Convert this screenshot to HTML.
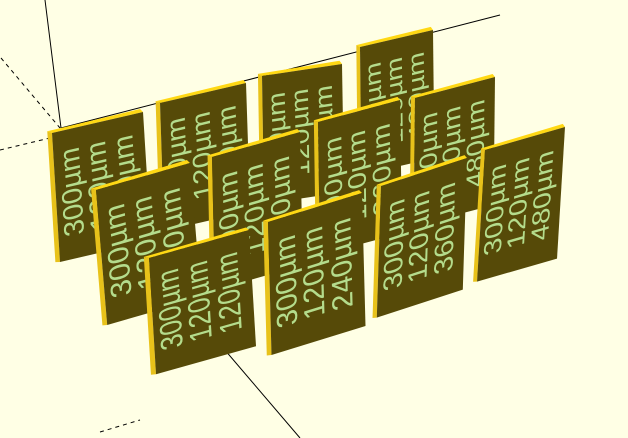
<!DOCTYPE html>
<html><head><meta charset="utf-8"><style>
html,body{margin:0;padding:0;background:#ffffe5;}
svg{display:block}
text{font-family:"Liberation Sans",sans-serif;font-size:31px;fill:#b4dc8c;}
</style></head><body>
<svg width="628" height="438" viewBox="0 0 628 438" xmlns="http://www.w3.org/2000/svg">
<rect width="628" height="438" fill="#ffffe5"/>
<g stroke="#000" stroke-width="1" fill="none">
<line x1="45" y1="0" x2="61" y2="128"/>
<line x1="61" y1="128" x2="500" y2="15"/>
<line x1="1" y1="58" x2="60" y2="128" stroke-dasharray="4,4"/>
<line x1="0" y1="150" x2="50" y2="138" stroke-dasharray="4,4"/>
<line x1="195" y1="315" x2="300" y2="438"/>
<line x1="170" y1="345" x2="250" y2="330"/>
<line x1="100" y1="432" x2="140" y2="420" stroke-dasharray="4,4"/>
</g>
<defs>
<g id="p">
<polygon points="-5,-3 97,-4 100,0 0,0" fill="#ffd814"/>
<polygon points="-5,-3 0,0 0,140 -5,139" fill="#e8c21a"/>
<rect x="0" y="0" width="100" height="140" fill="#564a08"/>
</g>
</defs>
<g transform="matrix(0.91,-0.21,0.057,0.921,52,133)"><use href="#p"/><text transform="translate(28,68) rotate(-90)" text-anchor="middle">300µm</text><text transform="translate(57,68) rotate(-90)" text-anchor="middle">120µm</text><text transform="translate(87,68) rotate(-90)" text-anchor="middle">120µm</text></g>
<g transform="matrix(0.86,-0.2,0.03,0.914,160,103)"><use href="#p"/><text transform="translate(28,68) rotate(-90)" text-anchor="middle">300µm</text><text transform="translate(57,68) rotate(-90)" text-anchor="middle">120µm</text><text transform="translate(87,68) rotate(-90)" text-anchor="middle">240µm</text></g>
<g transform="matrix(0.8,-0.12,0.015,0.914,262,76)"><use href="#p"/><text transform="translate(28,68) rotate(-90)" text-anchor="middle">300µm</text><text transform="translate(57,68) rotate(-90)" text-anchor="middle">120µm</text><text transform="translate(87,68) rotate(-90)" text-anchor="middle">360µm</text></g>
<g transform="matrix(0.73,-0.17,0.01,0.914,360,47)"><use href="#p"/><text transform="translate(28,68) rotate(-90)" text-anchor="middle">300µm</text><text transform="translate(57,68) rotate(-90)" text-anchor="middle">120µm</text><text transform="translate(87,68) rotate(-90)" text-anchor="middle">480µm</text></g>
<g transform="matrix(0.94,-0.27,0.08,0.964,96,190)"><use href="#p"/><text transform="translate(28,68) rotate(-90)" text-anchor="middle">300µm</text><text transform="translate(57,68) rotate(-90)" text-anchor="middle">120µm</text><text transform="translate(87,68) rotate(-90)" text-anchor="middle">120µm</text></g>
<g transform="matrix(0.88,-0.25,0.02,0.95,212,157)"><use href="#p"/><text transform="translate(28,68) rotate(-90)" text-anchor="middle">300µm</text><text transform="translate(57,68) rotate(-90)" text-anchor="middle">120µm</text><text transform="translate(87,68) rotate(-90)" text-anchor="middle">240µm</text></g>
<g transform="matrix(0.82,-0.22,0.014,0.95,318,122)"><use href="#p"/><text transform="translate(28,68) rotate(-90)" text-anchor="middle">300µm</text><text transform="translate(57,68) rotate(-90)" text-anchor="middle">120µm</text><text transform="translate(87,68) rotate(-90)" text-anchor="middle">360µm</text></g>
<g transform="matrix(0.8,-0.21,-0.01,0.914,415,98)"><use href="#p"/><text transform="translate(28,68) rotate(-90)" text-anchor="middle">300µm</text><text transform="translate(57,68) rotate(-90)" text-anchor="middle">120µm</text><text transform="translate(87,68) rotate(-90)" text-anchor="middle">480µm</text></g>
<g transform="matrix(1.0,-0.28,0.05,0.83,149,258)"><use href="#p"/><text transform="translate(28,68) rotate(-90)" text-anchor="middle">300µm</text><text transform="translate(57,68) rotate(-90)" text-anchor="middle">120µm</text><text transform="translate(87,68) rotate(-90)" text-anchor="middle">120µm</text></g>
<g transform="matrix(0.94,-0.29,0.025,0.95,268,222)"><use href="#p"/><text transform="translate(28,68) rotate(-90)" text-anchor="middle">300µm</text><text transform="translate(57,68) rotate(-90)" text-anchor="middle">120µm</text><text transform="translate(87,68) rotate(-90)" text-anchor="middle">240µm</text></g>
<g transform="matrix(0.86,-0.28,-0.03,0.94,381,186)"><use href="#p"/><text transform="translate(28,68) rotate(-90)" text-anchor="middle">300µm</text><text transform="translate(57,68) rotate(-90)" text-anchor="middle">120µm</text><text transform="translate(87,68) rotate(-90)" text-anchor="middle">360µm</text></g>
<g transform="matrix(0.8,-0.23,-0.057,0.94,485,150)"><use href="#p"/><text transform="translate(28,68) rotate(-90)" text-anchor="middle">300µm</text><text transform="translate(57,68) rotate(-90)" text-anchor="middle">120µm</text><text transform="translate(87,68) rotate(-90)" text-anchor="middle">480µm</text></g>
</svg>
</body></html>
